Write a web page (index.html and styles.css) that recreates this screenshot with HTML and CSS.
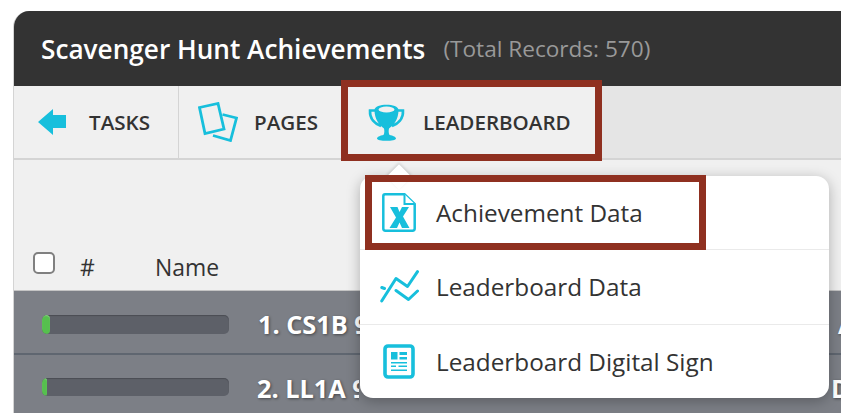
FILE: index.html
```html
<!DOCTYPE html>
<html lang="en">
<head>
<meta charset="utf-8">
<title>Scavenger Hunt Achievements</title>
<link rel="stylesheet" href="styles.css">
</head>
<body>
<div class="page">
  <section class="panel">
    <header class="panel-head">
      <h1 class="title">Scavenger Hunt Achievements</h1>
      <span class="total">(Total Records: 570)</span>
    </header>
    <nav class="toolbar">
      <a class="tool tool-tasks">
        <svg class="tool-icon icon-arrow" viewBox="0 0 28 26"><path d="M0 13 L15 0 V6 H28 V19 H15 V26 Z" fill="#17bfdc"/></svg>
        <span>TASKS</span>
      </a>
      <a class="tool tool-pages">
        <svg class="tool-icon icon-pages" viewBox="0 0 40 40"><g fill="none" stroke="#17bfdc" stroke-width="2.8" stroke-linejoin="miter"><path d="M15 33.5 L32.5 38.5 L38.5 16 L24.5 12.5"/><path d="M1.5 5.5 L20 1.5 L26 27 L7 31.5 Z"/></g></svg>
        <span>PAGES</span>
      </a>
      <a class="tool tool-board">
        <svg class="tool-icon icon-trophy" viewBox="0 0 37 37"><path d="M8 6.5 H2 C1.5 15 7 20 13 22 M29 6.5 H35 C35.5 15 30 20 24 22" fill="none" stroke="#17bfdc" stroke-width="2.6"/><path d="M6.5 6 C6.5 -1 30.5 -1 30.5 6 C30.5 15 26 21 21 24.5 C20.5 27 20.5 29 21.5 31 C25 31.5 28 33 28 34.5 C28 37.6 9 37.6 9 34.5 C9 33 12 31.5 15.5 31 C16.5 29 16.5 27 16 24.5 C11 21 6.5 15 6.5 6 Z" fill="#17bfdc"/><ellipse cx="18.5" cy="5.5" rx="8" ry="3" fill="#f0f0f0"/></svg>
        <span>LEADERBOARD</span>
      </a>
    </nav>
    <div class="filter-area"></div>
    <div class="col-head">
      <span class="check"></span>
      <span class="col-num">#</span>
      <span class="col-name">Name</span>
    </div>
    <div class="row row-a">
      <div class="bar"><div class="bar-fill"></div></div>
      <div class="row-name">1. CS1B 9</div>
      <div class="row-tail">A</div>
    </div>
    <div class="row row-b">
      <div class="bar"><div class="bar-fill"></div></div>
      <div class="row-name">2. LL1A 9</div>
      <div class="row-tail">D</div>
    </div>
  </section>

  <div class="menu">
    <span class="menu-caret"></span>
    <a class="menu-item">
      <span class="menu-slot"><svg class="icon-doc" viewBox="0 0 34 39"><path d="M3 1.3 H22.5 L32.7 11 V35.5 Q32.7 37.7 30.5 37.7 H3.5 Q1.3 37.7 1.3 35.5 V3 Q1.3 1.3 3 1.3 Z" fill="#fff" stroke="#17bfdc" stroke-width="2.5"/><path d="M22.5 1.3 V11 H32.7" fill="#fff" stroke="#17bfdc" stroke-width="2"/><path d="M8 14 H15.5 L17.5 19 L20 14 H27 L21 23.5 L27.5 35 H20 L17.5 29.5 L15 35 H7.5 L14 24.5 Z" fill="#17bfdc"/></svg></span>
      <span>Achievement Data</span>
    </a>
    <a class="menu-item">
      <span class="menu-slot"><svg class="icon-chart" viewBox="0 0 39 33"><g fill="none" stroke="#17bfdc" stroke-width="3" stroke-linecap="round" stroke-linejoin="round"><path d="M1.7 31 L16 8.5 L27.5 16.5 L37.5 1.7"/><path d="M16 20.5 L28.5 29.5 L37.5 21"/><path d="M1.8 17.5 L4.5 18.5"/></g></svg></span>
      <span>Leaderboard Data</span>
    </a>
    <a class="menu-item">
      <span class="menu-slot"><svg class="icon-sign" viewBox="0 0 32 35"><rect x="2" y="2" width="28" height="31" rx="3" fill="#fff" stroke="#17bfdc" stroke-width="3.6"/><path d="M8 8 H14.5 V15.5 H8 Z M16.5 8 H24 V11 H16.5 Z M16.5 13 H24 V15.5 H16.5 Z M8 18 H24 V19.5 H8 Z M8 21.5 H13 V23 H8 Z M15.5 21.5 H24 V23 H15.5 Z M8 25.5 H24 V27 H8 Z" fill="#17bfdc"/></svg></span>
      <span>Leaderboard Digital Sign</span>
    </a>
  </div>

  <div class="mark mark-board"></div>
  <div class="mark mark-item"></div>
</div>
</body>
</html>
```

FILE: styles.css
```css
* { box-sizing: border-box; }
html, body { margin: 0; height: 100%; overflow: hidden; background: #fff; }
body { font-family: "Open Sans", "Liberation Sans", sans-serif; color: #333; }
.page { position: relative; width: 841px; height: 413px; overflow: hidden; padding: 11px 0 0 13px; }
.panel { width: 860px; border-left: 1px solid #d4d4d4; background: #f0f0f0; border-top-left-radius: 16px; overflow: hidden; }
.panel-head { margin-left: -1px; height: 75px; background: #333; display: flex; align-items: center; padding-left: 28px; }
.title { margin: 0; font-size: 26.2px; font-weight: 600; color: #fff; line-height: 30px; }
.total { margin-left: 18px; font-size: 22.6px; color: #999; line-height: 30px; }
.toolbar { height: 74px; display: flex; align-items: stretch; background: #e5e5e5; border-bottom: 2px solid #d4d4d4; }
.tool { display: flex; align-items: center; background: #f0f0f0; font-size: 20.6px; font-weight: 600; color: #333; }
.tool-tasks { width: 165px; border-right: 1px solid #d4d4d4; padding-left: 24px; gap: 23px; }
.tool-pages { width: 162px; padding-left: 19px; gap: 16px; }
.tool-board { width: 260px; padding-left: 27px; gap: 18px; }
.tool-icon { display: block; flex: none; }
.icon-arrow { width: 28px; height: 26px; }
.icon-pages { width: 40px; height: 40px; }
.icon-trophy { width: 37px; height: 37px; }
.filter-area { height: 75px; }
.col-head { height: 56px; display: flex; align-items: center; padding: 10px 0 0 19px; font-size: 22.9px; font-weight: 500; color: #333; border-bottom: 1px solid #c4c4c4; }
.check { width: 22px; height: 22px; border: 2px solid #808080; border-radius: 5px; background: #fff; margin-top: -10px; }
.col-num { margin-left: 25px; width: 75px; }
.row { height: 64px; display: flex; align-items: center; background: #7c7f86; padding-left: 28px; border-bottom: 2px solid #5f6670; font-size: 25.3px; font-weight: 700; color: #fff; text-shadow: 1px 1px 3px rgba(0,0,0,.45); }
.bar { width: 187px; flex: none; background: #5d6068; border-radius: 5px; box-shadow: inset 0 1px 1px rgba(0,0,0,.2); overflow: hidden; }
.row-a .bar { height: 19px; margin-top: 5px; }
.row-b .bar { height: 18px; margin-top: 2px; }
.bar-fill { height: 100%; background: #56c04e; border-radius: 5px; box-shadow: inset 0 1px 1px rgba(255,255,255,.3); }
.row-a .bar-fill { width: 8px; }
.row-b .bar-fill { width: 5px; }
.row-name { width: 102px; margin: 4px 0 0 29px; white-space: nowrap; overflow: hidden; flex: none; }
.row-b .row-name { margin-left: 28px; }
.row-tail { margin-top: 4px; flex: none; }
.row-a .row-tail { margin-left: 478px; }
.row-b .row-tail { margin-left: 472px; }
.menu { position: absolute; left: 360px; top: 176px; width: 469px; height: 222px; background: #fff; border-radius: 13px; box-shadow: 0 3px 14px rgba(0,0,0,.28); display: flex; flex-direction: column; }
.menu-caret { position: absolute; left: 30px; top: -8px; width: 18px; height: 18px; background: #fff; transform: rotate(45deg); box-shadow: -1px -1px 3px rgba(0,0,0,.15); }
.menu-item { position: relative; flex: 1; display: flex; align-items: center; padding-left: 18px; gap: 16px; font-size: 24.3px; color: #333; border-bottom: 1px solid #eaeaea; }
.menu-item:last-child { border-bottom: 0; }
.menu-slot { width: 42px; flex: none; display: flex; justify-content: center; }
.icon-doc { width: 34px; height: 39px; display: block; }
.icon-chart { width: 39px; height: 33px; display: block; }
.icon-sign { width: 32px; height: 35px; display: block; }
.mark { position: absolute; border: 7px solid #8f3020; pointer-events: none; }
.mark-board { left: 341px; top: 80px; width: 261px; height: 81px; }
.mark-item { left: 365px; top: 175px; width: 341px; height: 75px; }
```
